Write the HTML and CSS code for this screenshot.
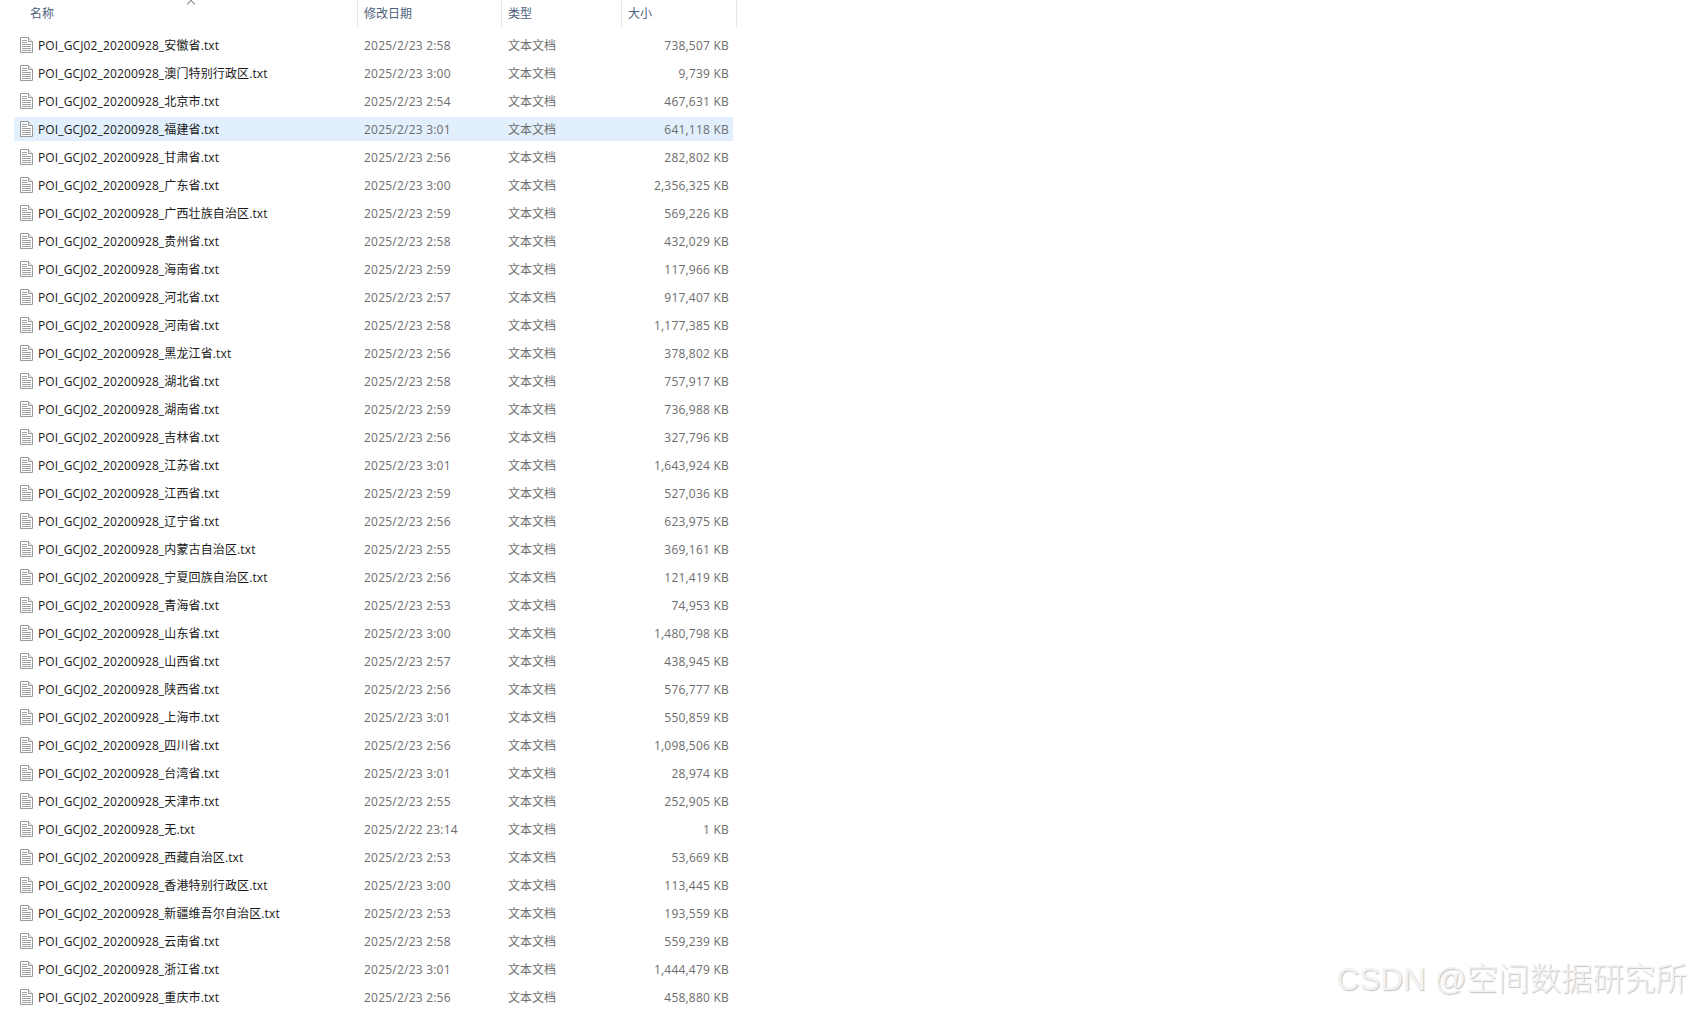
FILE: index.html
```html
<!DOCTYPE html>
<html lang="zh-CN">
<head>
    <meta charset="UTF-8">
    <title>POI_GCJ02_20200928</title>
    <link rel="stylesheet" href="styles.css">
</head>
<body>
    <svg class="sprite" width="0" height="0">
        <symbol id="txt" viewBox="0 0 13 16">
            <path d="M.5.5h8l4 4v11H.5z" fill="#fff" stroke="#9a9a9a"/>
            <path d="M8.5.5v4h4" fill="#f0f0f0" stroke="#9a9a9a"/>
            <path d="M2 3.5h5M2 5.5h5M2 7.5h9M2 9.5h9M2 11.5h9M2 13.5h9" fill="none" stroke="#a0a0a0"/>
        </symbol>
    </svg>

    <div class="files">
        <div class="head">
            <div class="col-name">名称<span class="sort"></span></div>
            <div class="col-date">修改日期</div>
            <div class="col-type">类型</div>
            <div class="col-size">大小</div>
        </div>
        <div class="list">
            <div class="row"><svg class="icon"><use href="#txt"/></svg><span class="name">POI_GCJ02_20200928_安徽省.txt</span><span class="date">2025/2/23 2:58</span><span class="type">文本文档</span><span class="size">738,507 KB</span></div>
            <div class="row"><svg class="icon"><use href="#txt"/></svg><span class="name">POI_GCJ02_20200928_澳门特别行政区.txt</span><span class="date">2025/2/23 3:00</span><span class="type">文本文档</span><span class="size">9,739 KB</span></div>
            <div class="row"><svg class="icon"><use href="#txt"/></svg><span class="name">POI_GCJ02_20200928_北京市.txt</span><span class="date">2025/2/23 2:54</span><span class="type">文本文档</span><span class="size">467,631 KB</span></div>
            <div class="row selected"><svg class="icon"><use href="#txt"/></svg><span class="name">POI_GCJ02_20200928_福建省.txt</span><span class="date">2025/2/23 3:01</span><span class="type">文本文档</span><span class="size">641,118 KB</span></div>
            <div class="row"><svg class="icon"><use href="#txt"/></svg><span class="name">POI_GCJ02_20200928_甘肃省.txt</span><span class="date">2025/2/23 2:56</span><span class="type">文本文档</span><span class="size">282,802 KB</span></div>
            <div class="row"><svg class="icon"><use href="#txt"/></svg><span class="name">POI_GCJ02_20200928_广东省.txt</span><span class="date">2025/2/23 3:00</span><span class="type">文本文档</span><span class="size">2,356,325 KB</span></div>
            <div class="row"><svg class="icon"><use href="#txt"/></svg><span class="name">POI_GCJ02_20200928_广西壮族自治区.txt</span><span class="date">2025/2/23 2:59</span><span class="type">文本文档</span><span class="size">569,226 KB</span></div>
            <div class="row"><svg class="icon"><use href="#txt"/></svg><span class="name">POI_GCJ02_20200928_贵州省.txt</span><span class="date">2025/2/23 2:58</span><span class="type">文本文档</span><span class="size">432,029 KB</span></div>
            <div class="row"><svg class="icon"><use href="#txt"/></svg><span class="name">POI_GCJ02_20200928_海南省.txt</span><span class="date">2025/2/23 2:59</span><span class="type">文本文档</span><span class="size">117,966 KB</span></div>
            <div class="row"><svg class="icon"><use href="#txt"/></svg><span class="name">POI_GCJ02_20200928_河北省.txt</span><span class="date">2025/2/23 2:57</span><span class="type">文本文档</span><span class="size">917,407 KB</span></div>
            <div class="row"><svg class="icon"><use href="#txt"/></svg><span class="name">POI_GCJ02_20200928_河南省.txt</span><span class="date">2025/2/23 2:58</span><span class="type">文本文档</span><span class="size">1,177,385 KB</span></div>
            <div class="row"><svg class="icon"><use href="#txt"/></svg><span class="name">POI_GCJ02_20200928_黑龙江省.txt</span><span class="date">2025/2/23 2:56</span><span class="type">文本文档</span><span class="size">378,802 KB</span></div>
            <div class="row"><svg class="icon"><use href="#txt"/></svg><span class="name">POI_GCJ02_20200928_湖北省.txt</span><span class="date">2025/2/23 2:58</span><span class="type">文本文档</span><span class="size">757,917 KB</span></div>
            <div class="row"><svg class="icon"><use href="#txt"/></svg><span class="name">POI_GCJ02_20200928_湖南省.txt</span><span class="date">2025/2/23 2:59</span><span class="type">文本文档</span><span class="size">736,988 KB</span></div>
            <div class="row"><svg class="icon"><use href="#txt"/></svg><span class="name">POI_GCJ02_20200928_吉林省.txt</span><span class="date">2025/2/23 2:56</span><span class="type">文本文档</span><span class="size">327,796 KB</span></div>
            <div class="row"><svg class="icon"><use href="#txt"/></svg><span class="name">POI_GCJ02_20200928_江苏省.txt</span><span class="date">2025/2/23 3:01</span><span class="type">文本文档</span><span class="size">1,643,924 KB</span></div>
            <div class="row"><svg class="icon"><use href="#txt"/></svg><span class="name">POI_GCJ02_20200928_江西省.txt</span><span class="date">2025/2/23 2:59</span><span class="type">文本文档</span><span class="size">527,036 KB</span></div>
            <div class="row"><svg class="icon"><use href="#txt"/></svg><span class="name">POI_GCJ02_20200928_辽宁省.txt</span><span class="date">2025/2/23 2:56</span><span class="type">文本文档</span><span class="size">623,975 KB</span></div>
            <div class="row"><svg class="icon"><use href="#txt"/></svg><span class="name">POI_GCJ02_20200928_内蒙古自治区.txt</span><span class="date">2025/2/23 2:55</span><span class="type">文本文档</span><span class="size">369,161 KB</span></div>
            <div class="row"><svg class="icon"><use href="#txt"/></svg><span class="name">POI_GCJ02_20200928_宁夏回族自治区.txt</span><span class="date">2025/2/23 2:56</span><span class="type">文本文档</span><span class="size">121,419 KB</span></div>
            <div class="row"><svg class="icon"><use href="#txt"/></svg><span class="name">POI_GCJ02_20200928_青海省.txt</span><span class="date">2025/2/23 2:53</span><span class="type">文本文档</span><span class="size">74,953 KB</span></div>
            <div class="row"><svg class="icon"><use href="#txt"/></svg><span class="name">POI_GCJ02_20200928_山东省.txt</span><span class="date">2025/2/23 3:00</span><span class="type">文本文档</span><span class="size">1,480,798 KB</span></div>
            <div class="row"><svg class="icon"><use href="#txt"/></svg><span class="name">POI_GCJ02_20200928_山西省.txt</span><span class="date">2025/2/23 2:57</span><span class="type">文本文档</span><span class="size">438,945 KB</span></div>
            <div class="row"><svg class="icon"><use href="#txt"/></svg><span class="name">POI_GCJ02_20200928_陕西省.txt</span><span class="date">2025/2/23 2:56</span><span class="type">文本文档</span><span class="size">576,777 KB</span></div>
            <div class="row"><svg class="icon"><use href="#txt"/></svg><span class="name">POI_GCJ02_20200928_上海市.txt</span><span class="date">2025/2/23 3:01</span><span class="type">文本文档</span><span class="size">550,859 KB</span></div>
            <div class="row"><svg class="icon"><use href="#txt"/></svg><span class="name">POI_GCJ02_20200928_四川省.txt</span><span class="date">2025/2/23 2:56</span><span class="type">文本文档</span><span class="size">1,098,506 KB</span></div>
            <div class="row"><svg class="icon"><use href="#txt"/></svg><span class="name">POI_GCJ02_20200928_台湾省.txt</span><span class="date">2025/2/23 3:01</span><span class="type">文本文档</span><span class="size">28,974 KB</span></div>
            <div class="row"><svg class="icon"><use href="#txt"/></svg><span class="name">POI_GCJ02_20200928_天津市.txt</span><span class="date">2025/2/23 2:55</span><span class="type">文本文档</span><span class="size">252,905 KB</span></div>
            <div class="row"><svg class="icon"><use href="#txt"/></svg><span class="name">POI_GCJ02_20200928_无.txt</span><span class="date">2025/2/22 23:14</span><span class="type">文本文档</span><span class="size">1 KB</span></div>
            <div class="row"><svg class="icon"><use href="#txt"/></svg><span class="name">POI_GCJ02_20200928_西藏自治区.txt</span><span class="date">2025/2/23 2:53</span><span class="type">文本文档</span><span class="size">53,669 KB</span></div>
            <div class="row"><svg class="icon"><use href="#txt"/></svg><span class="name">POI_GCJ02_20200928_香港特别行政区.txt</span><span class="date">2025/2/23 3:00</span><span class="type">文本文档</span><span class="size">113,445 KB</span></div>
            <div class="row"><svg class="icon"><use href="#txt"/></svg><span class="name">POI_GCJ02_20200928_新疆维吾尔自治区.txt</span><span class="date">2025/2/23 2:53</span><span class="type">文本文档</span><span class="size">193,559 KB</span></div>
            <div class="row"><svg class="icon"><use href="#txt"/></svg><span class="name">POI_GCJ02_20200928_云南省.txt</span><span class="date">2025/2/23 2:58</span><span class="type">文本文档</span><span class="size">559,239 KB</span></div>
            <div class="row"><svg class="icon"><use href="#txt"/></svg><span class="name">POI_GCJ02_20200928_浙江省.txt</span><span class="date">2025/2/23 3:01</span><span class="type">文本文档</span><span class="size">1,444,479 KB</span></div>
            <div class="row"><svg class="icon"><use href="#txt"/></svg><span class="name">POI_GCJ02_20200928_重庆市.txt</span><span class="date">2025/2/23 2:56</span><span class="type">文本文档</span><span class="size">458,880 KB</span></div>
        </div>
    </div>

    <div class="watermark">CSDN @空间数据研究所</div>
</body>
</html>
```

FILE: styles.css
```css
html, body {
    height: 100%;
}

body {
    margin: 0;
    background: #fff;
    font-family: "Open Sans", "Noto Sans CJK SC", sans-serif;
    font-size: 12px;
    color: #6d6d6d;
    overflow: hidden;
    position: relative;
}

.sprite {
    display: none;
}

.files {
    width: 737px;
}

/* header */
.head {
    display: grid;
    grid-template-columns: 358px 144px 120px 115px;
    height: 27px;
}

.head > div {
    border-right: 1px solid #e5e5e5;
    padding-left: 6px;
    line-height: 27px;
    color: #4c607a;
    position: relative;
}

.head .col-name {
    padding-left: 30px;
}

.sort {
    position: absolute;
    left: 188px;
    top: 1px;
    width: 5px;
    height: 5px;
    border-left: 1px solid #8a8a8a;
    border-top: 1px solid #8a8a8a;
    transform: rotate(45deg);
}

/* rows */
.list {
    padding: 6px 4px 0 14px;
}

.row {
    display: grid;
    grid-template-columns: 16px 334px 144px 120px 101px;
    align-items: center;
    height: 24px;
    margin-bottom: 4px;
}

.row.selected {
    background: #e1f0fc;
}

.icon {
    width: 13px;
    height: 16px;
    margin-left: 6px;
}

.name {
    color: #1a1a1a;
    padding-left: 8px;
    white-space: nowrap;
    letter-spacing: 0.13px;
}

.date, .size {
    letter-spacing: 0.22px;
}

.size {
    text-align: right;
}

.watermark {
    position: absolute;
    right: 5px;
    bottom: 10px;
    font-family: "Liberation Sans", "Noto Sans CJK SC", sans-serif;
    font-size: 31.5px;
    font-weight: 300;
    line-height: 40px;
    white-space: nowrap;
    color: #f2f2f2;
    text-shadow: 1px 1px 1px #c4c4c4;
}
```
